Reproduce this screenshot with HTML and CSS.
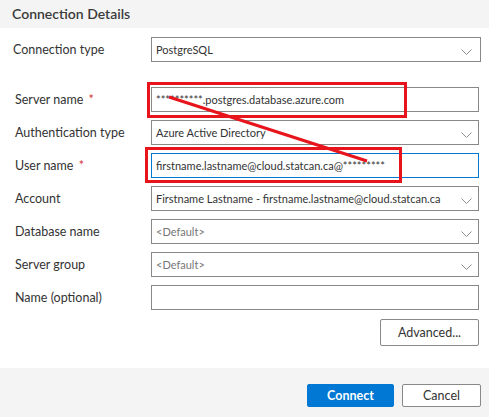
FILE: index.html
```html
<!DOCTYPE html>
<html>
<head>
<meta charset="utf-8">
<link rel="stylesheet" href="styles.css">
</head>
<body>
<div class="dialog">
  <div class="header">Connection Details</div>
  <div class="body">
    <div class="row row-first">
      <div class="label">Connection type</div>
      <div class="field select">PostgreSQL<svg class="chev" width="11" height="6" viewBox="0 0 11 6"><polyline points="0.5,0.5 5.5,5.5 10.5,0.5" fill="none" stroke="#8f8f8f" stroke-width="1"/></svg></div>
    </div>
    <div class="rows">
      <div class="row">
        <div class="label">Server name <span class="req">*</span></div>
        <div class="field">**********.postgres.database.azure.com</div>
      </div>
      <div class="row">
        <div class="label">Authentication type</div>
        <div class="field select">Azure Active Directory<svg class="chev" width="11" height="6" viewBox="0 0 11 6"><polyline points="0.5,0.5 5.5,5.5 10.5,0.5" fill="none" stroke="#8f8f8f" stroke-width="1"/></svg></div>
      </div>
      <div class="row">
        <div class="label">User name <span class="req">*</span></div>
        <div class="field focused">firstname.lastname@cloud.statcan.ca@*********</div>
      </div>
      <div class="row">
        <div class="label">Account</div>
        <div class="field select">Firstname Lastname - firstname.lastname@cloud.statcan.ca<svg class="chev" width="11" height="6" viewBox="0 0 11 6"><polyline points="0.5,0.5 5.5,5.5 10.5,0.5" fill="none" stroke="#8f8f8f" stroke-width="1"/></svg></div>
      </div>
      <div class="row">
        <div class="label">Database name</div>
        <div class="field select placeholder">&lt;Default&gt;<svg class="chev" width="11" height="6" viewBox="0 0 11 6"><polyline points="0.5,0.5 5.5,5.5 10.5,0.5" fill="none" stroke="#8f8f8f" stroke-width="1"/></svg></div>
      </div>
      <div class="row">
        <div class="label">Server group</div>
        <div class="field select placeholder">&lt;Default&gt;<svg class="chev" width="11" height="6" viewBox="0 0 11 6"><polyline points="0.5,0.5 5.5,5.5 10.5,0.5" fill="none" stroke="#8f8f8f" stroke-width="1"/></svg></div>
      </div>
      <div class="row">
        <div class="label">Name (optional)</div>
        <div class="field"></div>
      </div>
      <div class="adv-row">
        <button class="btn btn-adv">Advanced...</button>
      </div>
    </div>
  </div>
  <div class="footer">
    <button class="btn btn-primary">Connect</button>
    <button class="btn btn-cancel">Cancel</button>
  </div>
  <svg class="annot" width="489" height="417" viewBox="0 0 489 417">
    <rect x="148.5" y="83.5" width="257" height="33" fill="none" stroke="#e8141c" stroke-width="3"/>
    <rect x="146.5" y="148.5" width="254" height="33" fill="none" stroke="#e8141c" stroke-width="3"/>
    <line x1="169" y1="97" x2="367" y2="161" stroke="#e8141c" stroke-width="3"/>
  </svg>
</div>
</body>
</html>
```
FILE: styles.css
```css
* { box-sizing: border-box; }
html, body { margin: 0; padding: 0; background: #ffffff; }
body {
  font-family: "Lato", "Open Sans", sans-serif;
  font-size: 12.5px;
  color: #323130;
  width: 489px;
  height: 417px;
  overflow: hidden;
}
.dialog {
  position: relative;
  width: 489px;
  height: 417px;
  display: flex;
  flex-direction: column;
}
.header {
  height: 28px;
  background: #f4f4f4;
  padding-left: 12px;
  font-size: 14px;
  font-weight: 600;
  color: #3b3b3b;
  line-height: 28px;
}
.body {
  flex: 1;
  padding-top: 9px;
}
.row {
  display: flex;
  align-items: center;
  height: 25px;
}
.row-first {
  padding: 0 8px 0 13px;
}
.row-first .label { width: 138px; }
.rows {
  margin-top: 25px;
  padding: 0 10px 0 15px;
  display: flex;
  flex-direction: column;
  gap: 8px;
}
.label {
  width: 136px;
  flex: none;
  color: #333333;
}
.req { color: #d13438; margin-left: 2px; }
.field {
  position: relative;
  flex: 1;
  height: 25px;
  border: 1px solid #8a8886;
  padding: 0 24px 0 4px;
  line-height: 23px;
  font-size: 11px;
  white-space: nowrap;
  overflow: hidden;
  color: #333333;
  background: #fff;
}
.field.focused { border-color: #0078d4; }
.field.placeholder { color: #767676; }
.chev {
  position: absolute;
  right: 6px;
  top: 11px;
}
.row-first .chev { right: 8px; }
.adv-row {
  display: flex;
  justify-content: flex-end;
  margin-top: 1px;
}
.btn {
  font-family: "Lato", "Open Sans", sans-serif;
  font-size: 12.5px;
  border-radius: 2px;
  cursor: pointer;
}
.btn-adv {
  width: 99px;
  height: 27px;
  background: #fff;
  border: 1px solid #8a8886;
  color: #333;
}
.footer {
  height: 49px;
  background: #f4f4f4;
  display: flex;
  justify-content: flex-end;
  align-items: flex-start;
  gap: 8px;
  padding: 16px 8px 0 0;
}
.btn-primary {
  width: 87px;
  height: 23px;
  background: #0078d4;
  border: 1px solid #0078d4;
  color: #fff;
  font-weight: 700;
}
.btn-cancel {
  width: 79px;
  height: 23px;
  background: #fff;
  border: 1px solid #8a8886;
  color: #333;
}
.annot {
  position: absolute;
  left: 0;
  top: 0;
  pointer-events: none;
}
```
